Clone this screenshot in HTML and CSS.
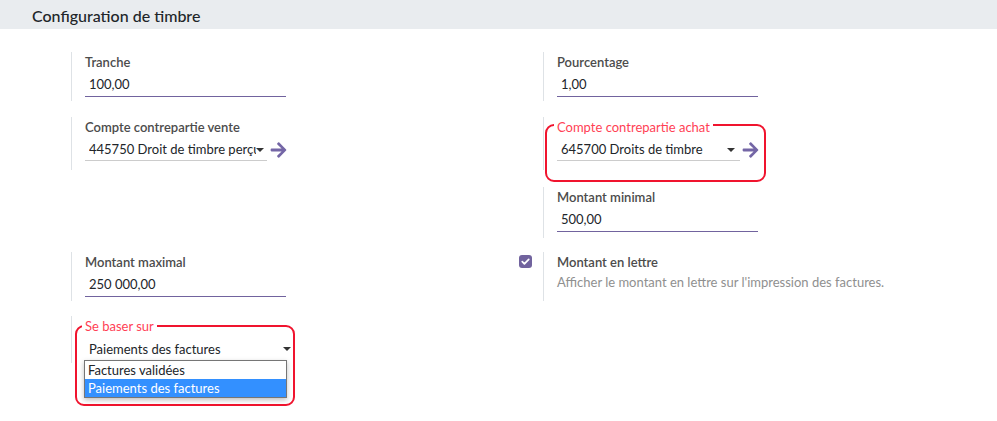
FILE: index.html
```html
<!DOCTYPE html>
<html lang="fr">
<head>
<meta charset="utf-8">
<title>Configuration de timbre</title>
<link rel="stylesheet" href="styles.css">
</head>
<body>
<div class="header"><h2 class="title">Configuration de timbre</h2></div>
<div class="settings">
  <div class="row r1">
    <div class="box">
      <div class="lp"></div>
      <div class="rp"><div class="label">Tranche</div><div class="input">100,00</div></div>
    </div>
    <div class="box">
      <div class="lp"></div>
      <div class="rp"><div class="label">Pourcentage</div><div class="input">1,00</div></div>
    </div>
  </div>
  <div class="row r2">
    <div class="box">
      <div class="lp"></div>
      <div class="rp">
        <div class="label">Compte contrepartie vente</div>
        <div class="m2o">
          <div class="select w182"><span class="val">445750 Droit de timbre perçu</span><span class="caret"></span></div>
          <svg class="arrow" viewBox="0 0 448 512"><path d="M190.5 66.9l22.2-22.2c9.4-9.4 24.6-9.4 33.9 0L441 239c9.4 9.4 9.4 24.6 0 33.9L246.6 467.3c-9.4 9.4-24.6 9.4-33.9 0l-22.2-22.2c-9.5-9.5-9.3-25 .4-34.3L311.4 296H24c-13.3 0-24-10.7-24-24v-32c0-13.3 10.7-24 24-24h287.4L190.9 101.2c-9.8-9.3-10-24.8-.4-34.3z"/></svg>
        </div>
      </div>
    </div>
    <div class="box">
      <div class="lp"></div>
      <div class="rp annotated">
        <div class="redbox rb-achat"></div>
        <div class="label red">Compte contrepartie achat</div>
        <div class="m2o">
          <div class="select w183"><span class="val">645700 Droits de timbre</span><span class="caret"></span></div>
          <svg class="arrow" viewBox="0 0 448 512"><path d="M190.5 66.9l22.2-22.2c9.4-9.4 24.6-9.4 33.9 0L441 239c9.4 9.4 9.4 24.6 0 33.9L246.6 467.3c-9.4 9.4-24.6 9.4-33.9 0l-22.2-22.2c-9.5-9.5-9.3-25 .4-34.3L311.4 296H24c-13.3 0-24-10.7-24-24v-32c0-13.3 10.7-24 24-24h287.4L190.9 101.2c-9.8-9.3-10-24.8-.4-34.3z"/></svg>
        </div>
      </div>
    </div>
  </div>
  <div class="row r3">
    <div class="box empty"></div>
    <div class="box">
      <div class="lp"></div>
      <div class="rp"><div class="label">Montant minimal</div><div class="input">500,00</div></div>
    </div>
  </div>
  <div class="row r4">
    <div class="box">
      <div class="lp"></div>
      <div class="rp"><div class="label">Montant maximal</div><div class="input">250 000,00</div></div>
    </div>
    <div class="box">
      <div class="lp"><span class="check"><svg viewBox="0 0 12 12"><path d="M3 6.2l2 2 4-4.2" fill="none" stroke="#fff" stroke-width="1.6" stroke-linecap="round" stroke-linejoin="round"/></svg></span></div>
      <div class="rp rp-short"><div class="label">Montant en lettre</div><div class="desc">Afficher le montant en lettre sur l'impression des factures.</div></div>
    </div>
  </div>
  <div class="row r5">
    <div class="box">
      <div class="lp"></div>
      <div class="rp annotated">
        <div class="redbox rb-base"></div>
        <div class="label red">Se baser sur</div>
        <div class="select w201 plain"><span class="val">Paiements des factures</span><span class="caret"></span></div>
        <div class="dropdown">
          <div class="opt">Factures validées</div>
          <div class="opt sel">Paiements des factures</div>
        </div>
      </div>
    </div>
  </div>
</div>
</body>
</html>
```
FILE: styles.css
```css
* { box-sizing: border-box; }
html, body { height: 100%; }
body {
  margin: 0;
  font-family: "Lato", "Open Sans", sans-serif;
  font-size: 13px;
  color: #4c4c4c;
  background: #fff;
}
.header {
  background: #e9ecef;
  height: 29px;
  padding-left: 32px;
}
.title {
  margin: 0;
  font-size: 16px;
  font-weight: 500;
  line-height: 31px;
  color: #212529;
}
.settings {
  padding: 23px 0 40px 47px;
}
.row {
  display: grid;
  grid-template-columns: 472px 472px;
}
.r1 { margin-bottom: 16px; }
.r2 { margin-bottom: 17px; }
.r3 { margin-bottom: 14px; }
.r4 { margin-bottom: 15px; }
.box {
  display: flex;
}
.lp {
  width: 24px;
  flex: none;
  padding-top: 3px;
}
.rp {
  border-left: 1px solid #dee2e6;
  padding-left: 13px;
  padding-bottom: 4px;
  flex: 1;
}
.annotated { position: relative; }
.label {
  font-weight: 600;
  line-height: 21px;
  color: #4c4c4c;
  position: relative;
  z-index: 1;
}
.label.red {
  color: #ff3f55;
  font-weight: 400;
  background: #fff;
  display: block;
  width: fit-content;
  padding: 0 3px;
  margin-left: -3px;
}
.input {
  width: 201px;
  height: 24px;
  line-height: 22px;
  padding-left: 4px;
  border-bottom: 1px solid #71639e;
  color: #212529;
}
.m2o {
  display: flex;
  align-items: center;
  padding-bottom: 5px;
}
.select {
  height: 23px;
  line-height: 22px;
  padding-left: 4px;
  border-bottom: 1px solid #ccc;
  color: #212529;
  display: flex;
  align-items: center;
  overflow: hidden;
  white-space: nowrap;
  position: relative;
}
.select .val { flex: 1; overflow: hidden; }
.caret {
  width: 0; height: 0;
  border-left: 4px solid transparent;
  border-right: 4px solid transparent;
  border-top: 4px solid #333;
  margin: 1px 3px 0 0;
  flex: none;
}
.w182 { width: 182px; }
.w183 { width: 183px; }
.w201 { width: 206px; }
.w183 .caret { margin-right: 5px; }
.select.plain { border-bottom: none; margin-top: 0; }
.select.plain .caret { margin-right: 0; }
.arrow {
  width: 17px;
  height: 18px;
  fill: #7466a6;
  margin-left: 3px;
}
.w183 + .arrow { margin-left: 2px; }
.redbox {
  position: absolute;
  border: 2px solid #f0142e;
  border-radius: 9px;
  z-index: 0;
}
.rb-achat { left: 1px; top: 7px; width: 221px; height: 58px; }
.rb-base { left: 3px; top: 9px; width: 220px; height: 81px; }
.rp-short { padding-bottom: 6px; }
.desc { color: #8f8f8f; line-height: 19px; }
.check {
  display: block;
  width: 13px;
  height: 13px;
  border-radius: 3px;
  background: #71639e;
}
.check svg { display: block; width: 13px; height: 13px; }
.r5 .rp { height: 47px; padding-bottom: 0; }
.dropdown {
  position: absolute;
  left: 12px;
  top: 44px;
  width: 203px;
  border: 1px solid #767676;
  background: #fff;
  box-shadow: 0 2px 5px rgba(0,0,0,0.25);
  z-index: 2;
}
.opt {
  height: 18px;
  line-height: 18px;
  padding-left: 3px;
  color: #212529;
}
.opt.sel { background: #3390ff; color: #fff; }
.empty { height: 51px; }
```
